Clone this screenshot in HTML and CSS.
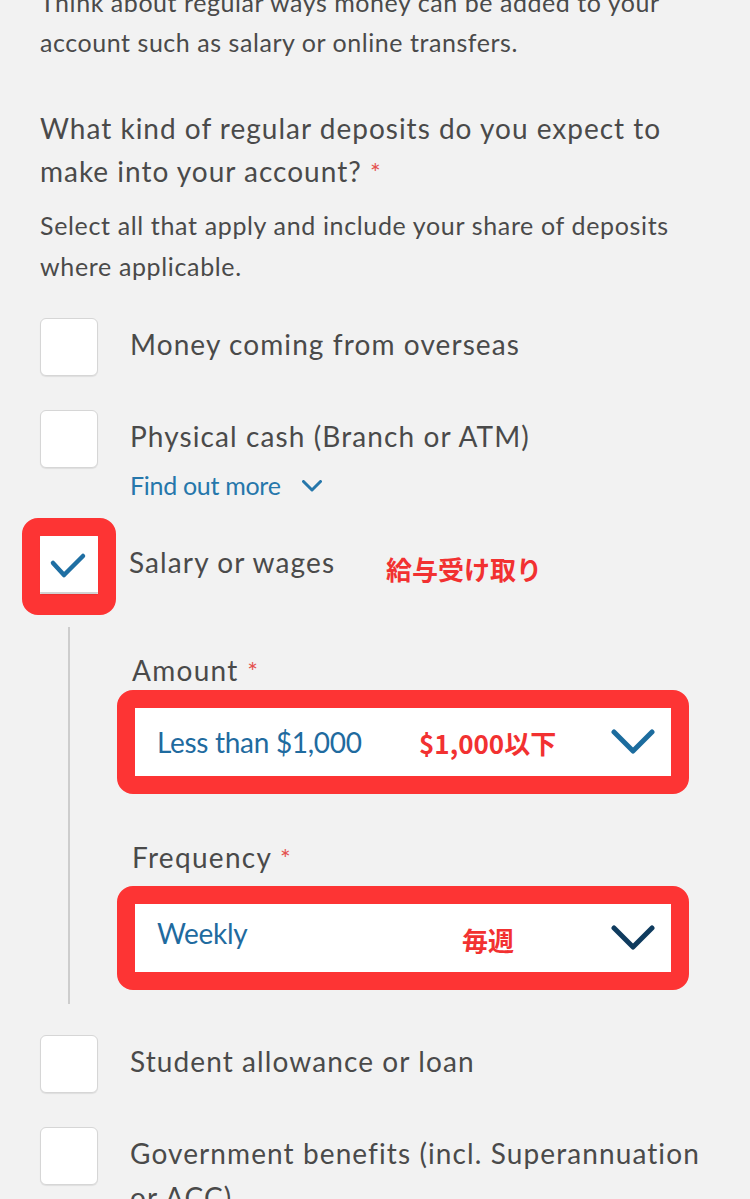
FILE: index.html
```html
<!DOCTYPE html>
<html lang="en">
<head>
<meta charset="utf-8">
<title>Regular deposits</title>
<link rel="stylesheet" href="styles.css">
</head>
<body>
<main class="page">
  <p class="intro">Think about regular ways money can be added to your account such as salary or online transfers.</p>
  <h2 class="question">What kind of regular deposits do you expect to make into your account?&nbsp;<span class="req">*</span></h2>
  <p class="hint">Select all that apply and include your share of deposits where applicable.</p>

  <ul class="options">
    <li class="option">
      <div class="row"><span class="box"></span><span class="label">Money coming from overseas</span></div>
    </li>
    <li class="option">
      <div class="row"><span class="box"></span><span class="label">Physical cash (Branch or ATM)</span></div>
      <a class="more" href="#">Find out more
        <svg class="more-chev" width="20" height="12" viewBox="0 0 20 12"><polyline points="1.5,1.5 10,10 18.5,1.5" fill="none" stroke="currentColor" stroke-width="3" stroke-linecap="round" stroke-linejoin="round"/></svg>
      </a>
    </li>
    <li class="option">
      <div class="row">
        <span class="hl hl-box"><span class="box checked">
          <svg width="58" height="58" viewBox="0 0 58 58"><polyline points="13,28 24,40 43,21" fill="none" stroke="#1f6fa3" stroke-width="4.5" stroke-linecap="round" stroke-linejoin="round"/></svg>
        </span></span>
        <span class="label">Salary or wages</span>
        <span class="note note-salary">給与受け取り</span>
      </div>
      <div class="sub">
        <div class="field">
          <div class="field-label">Amount <span class="req">*</span></div>
          <div class="hl hl-select">
            <div class="select">
              <span class="value">Less than $1,000</span>
              <span class="note note-amount">$1,000以下</span>
              <svg class="chev" width="44" height="26" viewBox="0 0 44 26"><polyline points="3,3 22,22 41,3" fill="none" stroke="#1c6c9e" stroke-width="5" stroke-linecap="round" stroke-linejoin="round"/></svg>
            </div>
          </div>
        </div>
        <div class="field field-freq">
          <div class="field-label">Frequency <span class="req">*</span></div>
          <div class="hl hl-select">
            <div class="select">
              <span class="value">Weekly</span>
              <span class="note note-freq">毎週</span>
              <svg class="chev" width="44" height="26" viewBox="0 0 44 26"><polyline points="3,3 22,22 41,3" fill="none" stroke="#0f3b5e" stroke-width="5" stroke-linecap="round" stroke-linejoin="round"/></svg>
            </div>
          </div>
        </div>
      </div>
    </li>
    <li class="option">
      <div class="row"><span class="box"></span><span class="label">Student allowance or loan</span></div>
    </li>
    <li class="option">
      <div class="row"><span class="box"></span><span class="label">Government benefits (incl. Superannuation or ACC)</span></div>
    </li>
  </ul>
</main>
</body>
</html>
```

FILE: styles.css
```css
* { box-sizing: border-box; }

html, body {
  margin: 0;
  background: #f2f2f2;
  height: 1199px;
  overflow: hidden;
}

body {
  font-family: Lato, "Open Sans", sans-serif;
  color: #4a4a4a;
}

.page {
  padding: 0 44px 0 40px;
}

.intro {
  margin: -18px 0 0;
  font-size: 25px;
  line-height: 40px;
  letter-spacing: 0.55px;
}

.question {
  margin: 45px 0 0;
  font-size: 28px;
  font-weight: 400;
  line-height: 43px;
  letter-spacing: 1px;
}

.req {
  color: #e4514f;
  font-size: 0.9em;
  letter-spacing: 0;
}

.hint {
  margin: 11px 0 0;
  font-size: 25px;
  line-height: 41px;
  letter-spacing: 0.65px;
}

.options {
  list-style: none;
  margin: 31px 0 0;
  padding: 0;
  display: flex;
  flex-direction: column;
  gap: 34px;
}

.row {
  display: flex;
  align-items: flex-start;
}

.box {
  flex: none;
  width: 58px;
  height: 58px;
  background: #fff;
  border: 1px solid #d6d6d6;
  border-radius: 6px;
  box-shadow: 0 1px 1px rgba(0, 0, 0, 0.08);
  display: flex;
  align-items: center;
  justify-content: center;
}

.box.checked {
  border: none;
  border-bottom: 2px solid #d2d2d2;
  border-radius: 2px;
}

.box svg { display: block; }

.label {
  margin-left: 32px;
  padding-top: 4px;
  font-size: 28px;
  line-height: 44px;
  letter-spacing: 1.1px;
}

.more {
  display: inline-flex;
  align-items: center;
  margin: 2px 0 2px 90px;
  font-size: 25px;
  line-height: 30px;
  letter-spacing: -0.3px;
  color: #2677ab;
  text-decoration: none;
}

.more-chev {
  margin-left: 21px;
  margin-top: 2px;
}

/* red annotation frames */
.hl {
  border: 18px solid #fd3434;
  border-radius: 16px;
}

.hl-box {
  flex: none;
  margin: -18px;
  border-bottom-width: 21px;
  margin-bottom: -21px;
  display: block;
}

.hl-box + .label { margin-left: 31px; }

.note {
  font-family: "Noto Sans CJK JP", sans-serif;
  font-weight: 700;
  color: #f23131;
  font-size: 26px;
  letter-spacing: 0;
  white-space: nowrap;
}

.note-salary {
  margin-left: 51px;
  padding-top: 13px;
  line-height: 40px;
}

.sub {
  margin: 33px 0 -3px 28px;
  border-left: 2px solid #cdcdcd;
  padding: 25px 0 14px 62px;
}

.field-label {
  font-size: 28px;
  line-height: 36px;
  letter-spacing: 1.3px;
}

.field-freq { margin-top: 45px; }

.hl-select {
  margin: 1px 0 0 -15px;
  width: 572px;
}

.field-freq .hl-select { margin-top: 10px; }

.select {
  position: relative;
  height: 68px;
  background: #fff;
  display: flex;
  align-items: center;
  padding: 0 16px 0 22px;
}

.value {
  font-size: 28px;
  letter-spacing: -0.3px;
  color: #1f6b9f;
}

.field-freq .value { margin-bottom: 10px; }

.chev {
  margin-left: auto;
  display: block;
}

.note-amount,
.note-freq {
  position: absolute;
  top: 0;
  bottom: 0;
  display: flex;
  align-items: center;
}

.note-amount { left: 284px; }
.note-freq { left: 327px; top: 2px; }
```
